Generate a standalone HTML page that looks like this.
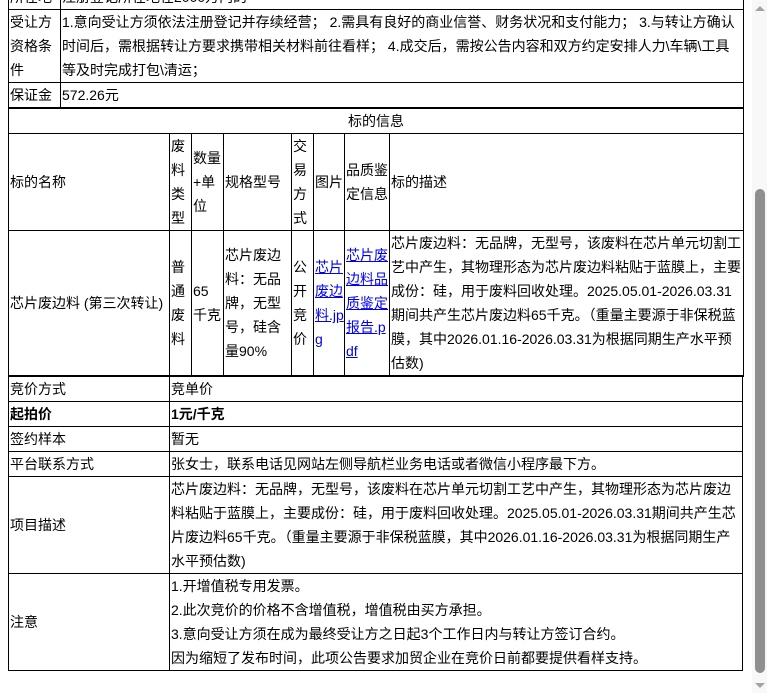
<!DOCTYPE html>
<html><head><meta charset="utf-8">
<style>
html,body{margin:0;padding:0;background:#fff;}
body{width:767px;height:693px;overflow:hidden;position:relative;font-family:"Liberation Sans","Noto Sans CJK SC",sans-serif;font-size:14px;color:#000;}
.c{position:absolute;box-sizing:border-box;border:1px solid #000;display:flex;align-items:center;padding:0 1px;line-height:24px;white-space:nowrap;overflow:hidden;}
.ctr{justify-content:center;text-align:center;}
.th{position:absolute;background:#000;}
a{color:#0000ee;text-decoration:underline;}
b{font-weight:bold;}
</style></head><body>
<div class="c" style="left:8px;top:-16px;width:53px;height:26px;">所在地</div>
<div class="c" style="left:60px;top:-16px;width:684px;height:26px;">注册登记所在地在2000万内的</div>
<div class="c" style="left:8px;top:9px;width:53px;height:74px;align-items:flex-start;"><div>受让方<br>资格条<br>件</div></div>
<div class="c" style="left:60px;top:9px;width:684px;height:74px;align-items:flex-start;"><div>1.意向受让方须依法注册登记并存续经营； 2.需具有良好的商业信誉、财务状况和支付能力； 3.与转让方确认<br>时间后，需根据转让方要求携带相关材料前往看样； 4.成交后，需按公告内容和双方约定安排人力\车辆\工具<br>等及时完成打包\清运；</div></div>
<div class="c" style="left:8px;top:82px;width:53px;height:26px;">保证金</div>
<div class="c" style="left:60px;top:82px;width:684px;height:26px;">572.26元</div>
<div class="th" style="left:8px;top:107px;width:736px;height:2px;"></div>
<div class="c ctr" style="left:8px;top:108px;width:736px;height:26px;">标的信息</div>
<div class="c" style="left:8px;top:133px;width:162px;height:98px;">标的名称</div>
<div class="c" style="left:169px;top:133px;width:23px;height:98px;"><div>废<br>料<br>类<br>型</div></div>
<div class="c" style="left:191px;top:133px;width:33px;height:98px;"><div>数量<br>+单<br>位</div></div>
<div class="c" style="left:223px;top:133px;width:69px;height:98px;">规格型号</div>
<div class="c" style="left:291px;top:133px;width:23px;height:98px;"><div>交<br>易<br>方<br>式</div></div>
<div class="c" style="left:313px;top:133px;width:32px;height:98px;">图片</div>
<div class="c" style="left:344px;top:133px;width:46px;height:98px;"><div>品质鉴<br>定信息</div></div>
<div class="c" style="left:389px;top:133px;width:355px;height:98px;">标的描述</div>
<div class="c" style="left:8px;top:230px;width:162px;height:146px;">芯片废边料 (第三次转让)</div>
<div class="c" style="left:169px;top:230px;width:23px;height:146px;"><div>普<br>通<br>废<br>料</div></div>
<div class="c" style="left:191px;top:230px;width:33px;height:146px;"><div>65<br>千克</div></div>
<div class="c" style="left:223px;top:230px;width:69px;height:146px;"><div>芯片废边<br>料：无品<br>牌，无型<br>号，硅含<br>量90%</div></div>
<div class="c" style="left:291px;top:230px;width:23px;height:146px;"><div>公<br>开<br>竞<br>价</div></div>
<div class="c" style="left:313px;top:230px;width:32px;height:146px;"><div><a>芯片<br>废边<br>料.jp<br>g</a></div></div>
<div class="c" style="left:344px;top:230px;width:46px;height:146px;"><div><a>芯片废<br>边料品<br>质鉴定<br>报告.p<br>df</a></div></div>
<div class="c" style="left:389px;top:230px;width:355px;height:146px;"><div>芯片废边料：无品牌，无型号，该废料在芯片单元切割工<br>艺中产生，其物理形态为芯片废边料粘贴于蓝膜上，主要<br>成份：硅，用于废料回收处理。2025.05.01-2026.03.31<br>期间共产生芯片废边料65千克。（重量主要源于非保税蓝<br>膜，其中2026.01.16-2026.03.31为根据同期生产水平预<br>估数)</div></div>
<div class="th" style="left:8px;top:375px;width:736px;height:2px;"></div>
<div class="c" style="left:8px;top:376px;width:162px;height:26px;">竞价方式</div>
<div class="c" style="left:169px;top:376px;width:574px;height:26px;">竞单价</div>
<div class="c" style="left:8px;top:401px;width:162px;height:26px;"><b>起拍价</b></div>
<div class="c" style="left:169px;top:401px;width:574px;height:26px;"><b>1元/千克</b></div>
<div class="c" style="left:8px;top:426px;width:162px;height:26px;">签约样本</div>
<div class="c" style="left:169px;top:426px;width:574px;height:26px;">暂无</div>
<div class="c" style="left:8px;top:451px;width:162px;height:26px;">平台联系方式</div>
<div class="c" style="left:169px;top:451px;width:574px;height:26px;">张女士，联系电话见网站左侧导航栏业务电话或者微信小程序最下方。</div>
<div class="c" style="left:8px;top:476px;width:162px;height:98px;">项目描述</div>
<div class="c" style="left:169px;top:476px;width:574px;height:98px;"><div>芯片废边料：无品牌，无型号，该废料在芯片单元切割工艺中产生，其物理形态为芯片废边<br>料粘贴于蓝膜上，主要成份：硅，用于废料回收处理。2025.05.01-2026.03.31期间共产生芯<br>片废边料65千克。（重量主要源于非保税蓝膜，其中2026.01.16-2026.03.31为根据同期生产<br>水平预估数)</div></div>
<div class="c" style="left:8px;top:573px;width:162px;height:98px;">注意</div>
<div class="c" style="left:169px;top:573px;width:574px;height:98px;"><div>1.开增值税专用发票。<br>2.此次竞价的价格不含增值税，增值税由买方承担。<br>3.意向受让方须在成为最终受让方之日起3个工作日内与转让方签订合约。<br>因为缩短了发布时间，此项公告要求加贸企业在竞价日前都要提供看样支持。</div></div>
<div style="position:absolute;left:752px;top:0;width:15px;height:693px;background:#f8f8f8;"></div>
<div style="position:absolute;left:755px;top:6px;width:0;height:0;border-left:5px solid transparent;border-right:5px solid transparent;border-bottom:5px solid #a3a3a3;"></div>
<div style="position:absolute;left:755px;top:683px;width:0;height:0;border-left:5px solid transparent;border-right:5px solid transparent;border-top:5px solid #a3a3a3;"></div>
<div style="position:absolute;left:755px;top:189px;width:10px;height:484px;background:#8f8f8f;border-radius:5px;"></div>
</body></html>
